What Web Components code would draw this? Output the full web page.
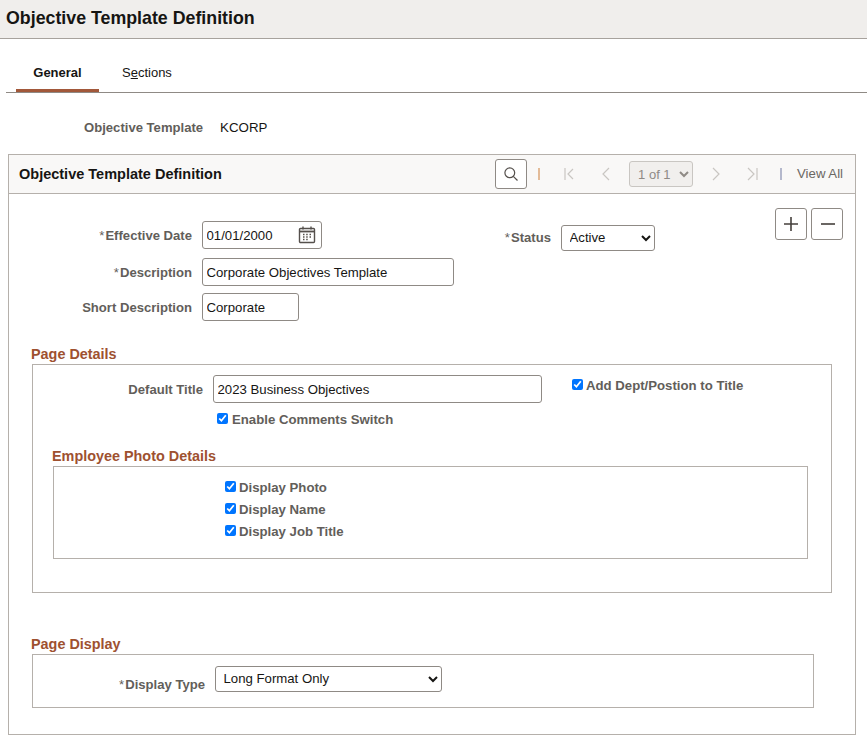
<!DOCTYPE html>
<html lang="en">
<head>
<meta charset="utf-8">
<title>Objective Template Definition</title>
<style>
  html, body { margin: 0; padding: 0; background: #fff; }
  body { font-family: "Liberation Sans", Arial, sans-serif; font-size: 14px; color: #333; }
</style>
</head>
<body>
<page-title>Objective Template Definition</page-title>
<tab-bar></tab-bar>
<key-line label="Objective Template" value="KCORP"></key-line>

<ps-panel title="Objective Template Definition">
  <div style="display:grid;grid-template-columns:446px 1fr">
    <div style="display:flex;flex-direction:column">
      <form-row label="*Effective Date" label-width="183" label-pad="6" style="margin-bottom:9px">
        <text-field value="01/01/2000" width="120" calendar></text-field>
      </form-row>
      <form-row label="*Description" label-width="183" label-pad="6" style="margin-bottom:7px">
        <text-field value="Corporate Objectives Template" width="252"></text-field>
      </form-row>
      <form-row label="Short Description" label-width="183" label-pad="6">
        <text-field value="Corporate" width="97"></text-field>
      </form-row>
    </div>
    <div style="display:flex;justify-content:space-between;align-items:flex-start;padding-right:12px">
      <form-row label="*Status" label-width="96" label-pad="4" style="margin-top:4px">
        <ps-select width="94" options="Active,Inactive"></ps-select>
      </form-row>
      <row-actions style="margin-top:-13px"></row-actions>
    </div>
  </div>

  <group-box heading="Page Details" style="margin:25px 23px 0 23px">
    <div style="height:227px;box-sizing:border-box;padding-top:10px">
      <div style="display:flex;align-items:flex-start">
        <form-row label="Default Title" label-width="170" label-pad="6">
          <text-field value="2023 Business Objectives" width="329"></text-field>
        </form-row>
        <check-field label="Add Dept/Postion to Title" style="margin:1px 0 0 30px"></check-field>
      </div>
      <check-field label="Enable Comments Switch" style="margin:7px 0 0 184px;--gap:4px"></check-field>

      <group-box heading="Employee Photo Details" style="margin:18px 23px 0 20px">
        <div style="height:91px;box-sizing:border-box;padding:11px 0 0 171px;display:flex;flex-direction:column;gap:2px">
          <check-field label="Display Photo"></check-field>
          <check-field label="Display Name"></check-field>
          <check-field label="Display Job Title"></check-field>
        </div>
      </group-box>
    </div>
  </group-box>

  <group-box heading="Page Display" style="margin:43px 41px 26px 23px">
    <div style="height:52px;box-sizing:border-box;padding-top:11px">
      <form-row label="*Display Type" label-width="172" label-pad="10">
        <ps-select width="227" options="Long Format Only,Short Format Only"></ps-select>
      </form-row>
    </div>
  </group-box>
</ps-panel>

<script>
// small helper, every component below is a plain shadow-root element
function mount(el, html) {
  el.attachShadow({ mode: 'open' }).innerHTML = html;
}

const FONT = `"Liberation Sans", Arial, sans-serif`;

class PageTitle extends HTMLElement {
  connectedCallback() {
    mount(this, `
      <style>
        :host { display: block; height: 38px; box-sizing: content-box; background: #f0eeec; border-bottom: 1px solid #a7a29d; }
        h1 { margin: 0; padding: 8px 0 0 6px; font: bold 17.8px/20px ${FONT}; color: #161513; }
      </style>
      <h1><slot></slot></h1>`);
  }
}

class TabBar extends HTMLElement {
  connectedCallback() {
    mount(this, `
      <style>
        :host { display: flex; height: 54px; margin: 0 0 0 6px; box-sizing: border-box; border-bottom: 1px solid #8f8a85; padding-left: 10px; }
        a { box-sizing: border-box; height: 53px; padding-top: 25px; font: 13px/18px ${FONT}; color: #161513; }
        .on { width: 83px; text-align: center; font-weight: bold; border-bottom: 3px solid #a2583a; }
        .off { margin-left: 23px; }
        u { text-decoration: underline; }
      </style>
      <a class="on">General</a>
      <a class="off">S<u>e</u>ctions</a>`);
  }
}

class KeyLine extends HTMLElement {
  connectedCallback() {
    mount(this, `
      <style>
        :host { display: flex; padding: 26px 0 17px 84px; font: 13.3px/18px ${FONT}; }
        b { color: #625e5a; margin-right: 17px; font-weight: bold; font-size: 13.1px; }
        span { color: #161513; }
      </style>
      <b>${this.getAttribute('label')}</b><span>${this.getAttribute('value')}</span>`);
  }
}

class PsPanel extends HTMLElement {
  connectedCallback() {
    mount(this, `
      <style>
        :host { display: block; margin: 0 11px 0 8px; border: 1px solid #b5b0ab; }
        header { display: flex; align-items: center; height: 38px; background: #f9f8f7; border-bottom: 1px solid #b5b0ab; padding: 0 12px 0 10px; }
        h2 { margin: 0; flex: 1; font: bold 14.5px/18px ${FONT}; color: #161513; }
        .body { padding-top: 27px; }
      </style>
      <header><h2>${this.getAttribute('title')}</h2><panel-nav></panel-nav></header>
      <div class="body"><slot></slot></div>`);
  }
}

class PanelNav extends HTMLElement {
  connectedCallback() {
    const chev = d => `<svg width="14" height="14" viewBox="0 0 14 14" fill="none" stroke="#c9c6c2" stroke-width="1.2"><path d="${d}"/></svg>`;
    mount(this, `
      <style>
        :host { display: flex; align-items: center; font: 13.2px/16px ${FONT}; color: #6b6762; }
        .search { box-sizing: border-box; width: 32px; height: 30px; border: 1px solid #8f8a85; border-radius: 3px; background: #fff; display: flex; align-items: center; justify-content: center; }
        .sep { width: 2px; height: 12px; }
        select { box-sizing: border-box; width: 64px; height: 26px; font: 13px ${FONT}; color: #8f8a85; background: #f1efed; border: 1px solid #c9c6c2; border-radius: 3px; padding: 0 0 0 4px; opacity: 1; }
      </style>
      <span class="search"><svg width="14" height="14" viewBox="0 0 14 14" fill="none" stroke="#55504c" stroke-width="1.2"><circle cx="5.8" cy="5.8" r="4.9"/><path d="M9.3 9.3 13.5 13.5"/></svg></span>
      <span class="sep" style="background:#e3bb98;margin:0 22px 0 11px"></span>
      ${chev('M3 1v12M11 2 6 7l5 5')}
      <span style="width:23px"></span>
      ${chev('M10 1 4 7l6 6')}
      <span style="width:16px"></span>
      <select disabled><option>1 of 1</option></select>
      <span style="width:16px"></span>
      ${chev('M4 1l6 6-6 6')}
      <span style="width:22px"></span>
      ${chev('M3 1l6 6-6 6M12 1v12')}
      <span class="sep" style="background:#b4b8cc;margin:0 15px 0 21px"></span>
      <span>View All</span>`);
  }
}

class FormRow extends HTMLElement {
  connectedCallback() {
    const w = this.getAttribute('label-width');
    const pad = this.getAttribute('label-pad');
    const text = this.getAttribute('label').replace(/^\*/, '<i>*</i>');
    mount(this, `
      <style>
        :host { display: flex; align-items: flex-start; gap: 10px; }
        label { width: ${w}px; flex: none; padding-top: ${pad}px; text-align: right; font: bold 13.1px/18px ${FONT}; color: #625e5a; }
        i { font-style: normal; font-weight: normal; margin-right: 1px; }
      </style>
      <label>${text}</label><slot></slot>`);
  }
}

class TextField extends HTMLElement {
  connectedCallback() {
    const cal = this.hasAttribute('calendar') ? `<svg width="18" height="18" viewBox="0 0 18 18" fill="none" stroke="#55504c"><rect x="1.5" y="2.5" width="15" height="14" rx="1" stroke-width="1.4"/><path d="M1.5 5.5h15" stroke-width="1.8"/><path d="M5 .5v3M13 .5v3" stroke-width="1.4"/><path d="M5 8.5h1.5M8.2 8.5h1.5M11.5 8.5H13M5 11h1.5M8.2 11h1.5M11.5 11H13M5 13.5h1.5M8.2 13.5h1.5" stroke-width="1.3"/></svg>` : '';
    mount(this, `
      <style>
        :host { display: flex; flex: none; align-items: center; box-sizing: border-box; width: ${this.getAttribute('width')}px; height: 28px; border: 1px solid #8f8a85; border-radius: 3px; background: #fff; padding: 0 3.5px; }
        input { flex: 1; min-width: 0; border: 0; outline: 0; padding: 0; font: 13.2px ${FONT}; color: #161513; background: transparent; }
        svg { flex: none; margin-right: 1.5px; }
      </style>
      <input type="text" value="${this.getAttribute('value')}">${cal}`);
  }
}

class PsSelect extends HTMLElement {
  connectedCallback() {
    const opts = this.getAttribute('options').split(',').map(o => `<option>${o}</option>`).join('');
    mount(this, `
      <style>
        :host { display: block; flex: none; }
        select { display: block; box-sizing: border-box; width: ${this.getAttribute('width')}px; height: 26px; padding: 0 0 1px 3.5px; font: 13.2px ${FONT}; color: #161513; background: #fff; border: 1px solid #8f8a85; border-radius: 3px; }
      </style>
      <select>${opts}</select>`);
  }
}

class RowActions extends HTMLElement {
  connectedCallback() {
    mount(this, `
      <style>
        :host { display: flex; gap: 4px; }
        span { box-sizing: border-box; width: 32px; height: 32px; border: 1px solid #8f8a85; border-radius: 3px; background: #fff; display: flex; align-items: center; justify-content: center; }
        span + span { padding-left: 2px; }
      </style>
      <span><svg width="16" height="16" viewBox="0 0 16 16" stroke="#45403c" stroke-width="1.6"><path d="M8 1v14M1 8h14"/></svg></span>
      <span><svg width="16" height="16" viewBox="0 0 16 16" stroke="#45403c" stroke-width="1.6"><path d="M1 8h14"/></svg></span>`);
  }
}

class CheckField extends HTMLElement {
  connectedCallback() {
    mount(this, `
      <style>
        :host { display: block; font: bold 13.2px/20px ${FONT}; color: #625e5a; }
        label { display: flex; align-items: center; gap: var(--gap, 3px); }
        input { margin: -3px 0 0; width: 11px; height: 11px; accent-color: #0075ff; }
      </style>
      <label><input type="checkbox" checked>${this.getAttribute('label')}</label>`);
  }
}

class GroupBox extends HTMLElement {
  connectedCallback() {
    mount(this, `
      <style>
        :host { display: block; }
        h3 { margin: 0 0 2px -1px; font: bold 14.4px/16px ${FONT}; color: #9e5130; }
        .box { border: 1px solid #b5b0ab; }
      </style>
      <h3>${this.getAttribute('heading')}</h3>
      <div class="box"><slot></slot></div>`);
  }
}

customElements.define('page-title', PageTitle);
customElements.define('tab-bar', TabBar);
customElements.define('key-line', KeyLine);
customElements.define('ps-panel', PsPanel);
customElements.define('panel-nav', PanelNav);
customElements.define('form-row', FormRow);
customElements.define('text-field', TextField);
customElements.define('ps-select', PsSelect);
customElements.define('row-actions', RowActions);
customElements.define('check-field', CheckField);
customElements.define('group-box', GroupBox);
</script>
</body>
</html>
